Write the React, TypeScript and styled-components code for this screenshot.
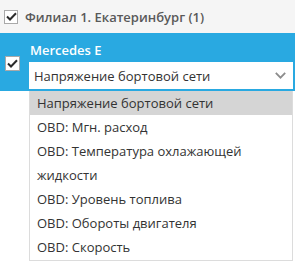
import React from "react";
import styled, { createGlobalStyle } from "styled-components";

const GlobalStyle = createGlobalStyle`
  html, body {
    margin: 0;
    padding: 0;
    background: #ffffff;
  }
  body {
    font-family: "Open Sans", "Liberation Sans", sans-serif;
    font-size: 13px;
    color: #333;
  }
`;

const Page = styled.div`
  width: 295px;
  height: 265px;
  position: relative;
  overflow: hidden;
  background: #fff;
`;

const GroupRow = styled.div`
  height: 33px;
  display: flex;
  align-items: center;
  gap: 7px;
  padding-left: 4px;
  background: #f5f5f5;
`;

const Box = styled.span<{ size: number }>`
  width: ${({ size }) => size}px;
  height: ${({ size }) => size}px;
  box-sizing: border-box;
  border: 1px solid #a9a9a9;
  background: #fff;
  display: flex;
  align-items: center;
  justify-content: center;
  flex-shrink: 0;
`;

const GroupTitle = styled.span`
  font-weight: 600;
  font-size: 13px;
  color: #595959;
  margin-top: 1px;
`;

const VehicleBlock = styled.div`
  height: 58px;
  background: #29a9e1;
  display: flex;
  position: relative;
`;

const BoxColumn = styled.div`
  width: 29px;
  display: flex;
  align-items: flex-start;
  padding: 23px 0 0 5px;
  box-sizing: border-box;
`;

const VehicleBody = styled.div`
  flex: 1;
  display: flex;
  flex-direction: column;
  padding: 7px 2px 0 0;
`;

const VehicleName = styled.div`
  color: #fff;
  font-weight: 600;
  font-size: 13px;
  line-height: 20px;
  height: 22px;
  padding-left: 1px;
`;

const SelectBox = styled.div`
  height: 27px;
  background: #fff;
  display: flex;
  align-items: center;
  justify-content: space-between;
  padding: 0 7px 0 5px;
  color: #333;
  font-size: 13px;
`;

const Menu = styled.ul`
  position: absolute;
  top: 91px;
  left: 29px;
  width: 264px;
  margin: 0;
  padding: 0 0 1px;
  list-style: none;
  box-sizing: border-box;
  border: 1px solid #dcdcdc;
  border-top: none;
  background: #fff;
`;

const MenuItem = styled.li<{ active?: boolean }>`
  padding: 0 8px 0 7px;
  line-height: 24px;
  font-size: 13px;
  color: #333;
  background: ${({ active }) => (active ? "#d5d5d5" : "transparent")};
`;

function Check() {
  return (
    <svg width="11" height="9" viewBox="0 0 11 9">
      <path d="M1 4.5 L4 7.5 L10 1.2" fill="none" stroke="#2b2b2b" strokeWidth="2" />
    </svg>
  );
}

function Chevron() {
  return (
    <svg width="11" height="7" viewBox="0 0 11 7">
      <path d="M0.8 0.8 L5.5 5.6 L10.2 0.8" fill="none" stroke="#8c8c8c" strokeWidth="1.8" />
    </svg>
  );
}

const sensors = [
  "Напряжение бортовой сети",
  "OBD: Мгн. расход",
  "OBD: Температура охлажающей жидкости",
  "OBD: Уровень топлива",
  "OBD: Обороты двигателя",
  "OBD: Скорость",
];

export default function App() {
  return (
    <Page>
      <GlobalStyle />
      <GroupRow>
        <Box size={14}>
          <Check />
        </Box>
        <GroupTitle>Филиал 1. Екатеринбург (1)</GroupTitle>
      </GroupRow>
      <VehicleBlock>
        <BoxColumn>
          <Box size={15}>
            <Check />
          </Box>
        </BoxColumn>
        <VehicleBody>
          <VehicleName>Mercedes E</VehicleName>
          <SelectBox>
            <span>{sensors[0]}</span>
            <Chevron />
          </SelectBox>
        </VehicleBody>
      </VehicleBlock>
      <Menu>
        {sensors.map((s, i) => (
          <MenuItem key={s} active={i === 0}>
            {s}
          </MenuItem>
        ))}
      </Menu>
    </Page>
  );
}
